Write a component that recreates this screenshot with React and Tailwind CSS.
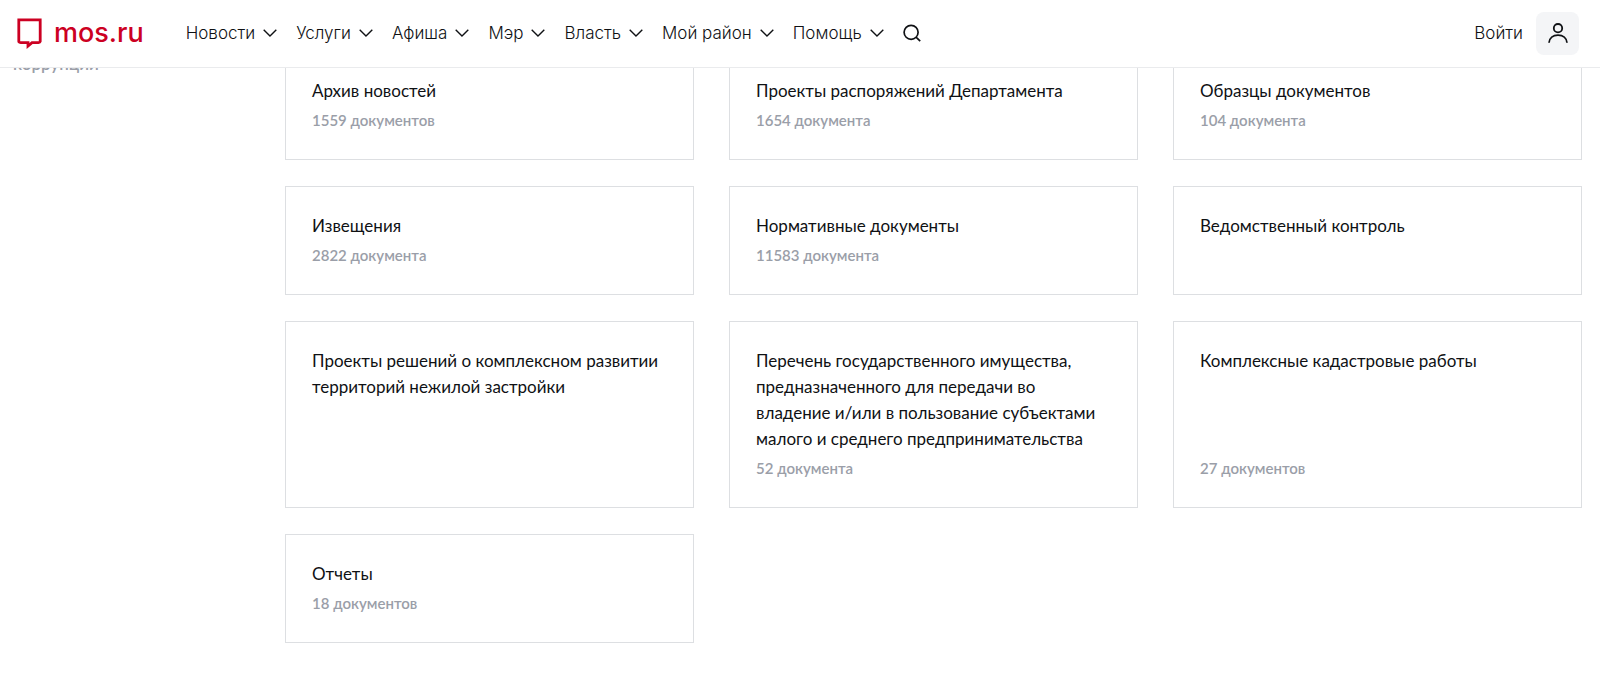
import React from 'react';

const navItems = ['Новости', 'Услуги', 'Афиша', 'Мэр', 'Власть', 'Мой район', 'Помощь'];

const documents = [
  { title: 'Архив новостей', count: '1559 документов' },
  { title: 'Проекты распоряжений Департамента', count: '1654 документа' },
  { title: 'Образцы документов', count: '104 документа' },
  { title: 'Извещения', count: '2822 документа' },
  { title: 'Нормативные документы', count: '11583 документа' },
  { title: 'Ведомственный контроль' },
  { title: 'Проекты решений о комплексном развитии территорий нежилой застройки' },
  {
    title:
      'Перечень государственного имущества, предназначенного для передачи во владение и/или в пользование субъектами малого и среднего предпринимательства',
    count: '52 документа',
  },
  { title: 'Комплексные кадастровые работы', count: '27 документов' },
  { title: 'Отчеты', count: '18 документов' },
];

const Logo = () => (
  <a href="#" className="flex items-center gap-[11px] text-[#cc0022]">
    <svg width="26" height="32" viewBox="0 0 26 32" fill="none" stroke="currentColor" strokeWidth="2.8">
      <path d="M1.8 2.8H23.2V24.6Q23 25.6 21.5 25.6H15L11 29V25.6H4Q2 25.6 1.8 24.6Z" />
    </svg>
    <span className="text-[27px] leading-8 font-medium">mos.ru</span>
  </a>
);

const Chevron = () => (
  <svg width="14" height="8" viewBox="0 0 14 8" fill="none" stroke="currentColor" strokeWidth="1.4">
    <path d="M0.7 0.8L7 7L13.3 0.8" />
  </svg>
);

const Header = () => (
  <header className="fixed inset-x-0 top-0 z-10 flex h-[68px] items-center border-b border-[#eaebed] bg-white pb-px pl-[17px] pr-[21px] font-['Inter',sans-serif] text-[#0f1114]">
    <Logo />
    <nav className="ml-[42px] flex items-center gap-[19px]">
      {navItems.map((item) => (
        <button key={item} type="button" className="flex items-center gap-2 text-[17px] leading-6 font-light">
          {item}
          <Chevron />
        </button>
      ))}
      <button type="button" aria-label="Поиск">
        <svg width="18" height="18" viewBox="0 0 18 18" fill="none" stroke="currentColor" strokeWidth="1.7">
          <circle cx="8.1" cy="8.3" r="7" />
          <path d="M13 13.2L17.2 17.2" />
        </svg>
      </button>
    </nav>
    <div className="ml-auto flex items-center gap-[13px]">
      <a href="#" className="text-[17px] leading-6 font-light">Войти</a>
      <button
        type="button"
        aria-label="Личный кабинет"
        className="flex size-[43px] items-center justify-center rounded-lg bg-[#f4f5f7]"
      >
        <svg width="20" height="20" viewBox="0 0 20 20" fill="none" stroke="currentColor" strokeWidth="1.8">
          <circle cx="10" cy="5.2" r="4.2" />
          <path d="M1 19.8C1.4 15 5 12.2 10 12.2S18.6 15 19 19.8" />
        </svg>
      </button>
    </div>
  </header>
);

const DocumentCard = ({ title, count }) => (
  <a href="#" className="flex flex-col justify-between border border-[#dddfe2] p-[26px] leading-[26px]">
    <span className="text-[17px] text-[#0f1114]">{title}</span>
    {count && <span className="mt-[3px] text-[15px] font-semibold text-[#9a9ea8]">{count}</span>}
  </a>
);

const App = () => {
  return (
    <div className="min-h-screen bg-white font-['Lato','Open_Sans',sans-serif]">
      <Header />
      <div className="flex pt-[51px] pb-11 pl-[13px] pr-[18px]">
        {/* Sidebar */}
        <aside className="w-[272px] shrink-0">
          <a href="#" className="block text-[17px] leading-[26px] font-semibold text-[#9a9ea8]">коррупции</a>
        </aside>

        {/* Documents */}
        <main className="grid flex-1 grid-cols-3 gap-x-[35px] gap-y-[26px]">
          {documents.map((doc) => (
            <DocumentCard key={doc.title} title={doc.title} count={doc.count} />
          ))}
        </main>
      </div>
    </div>
  );
};

export default App;
